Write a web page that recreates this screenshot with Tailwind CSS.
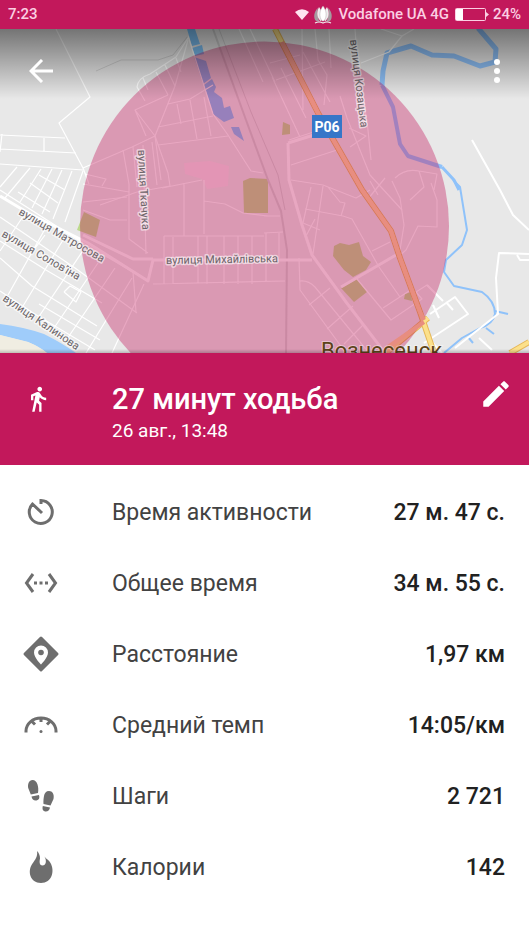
<!DOCTYPE html>
<html lang="ru">
<head>
  <meta charset="UTF-8" />
  <meta name="viewport" content="width=device-width, initial-scale=1.0" />
  <title>27 минут ходьба</title>
  <script src="https://cdn.jsdelivr.net/npm/@tailwindcss/browser@4"></script>
</head>
<body class="min-h-screen bg-white font-['Roboto',sans-serif] text-[#212121]">

  <!-- Status bar -->
  <div class="flex h-[29px] items-center justify-between bg-[#c2185b] px-2 text-[15px] font-medium text-[#fbcfe3]">
    <span>7:23</span>
    <div class="flex items-center">
      <svg class="mr-1 h-[11px] w-[14px]" viewBox="0 0 14 11" fill="#ffe3f0"><path d="M0 3Q7-2.500 14 3L7 11Z"/></svg>
      <svg class="mr-1.5 h-5 w-5" viewBox="0 0 20 20">
        <path d="M5 3C1 6 0 13 3 16L7 17C4 12 4 7 5 3ZM15 3C19 6 20 13 17 16L13 17C16 12 16 7 15 3Z" fill="#a59ba0"/>
        <path d="M6 2C3 8 4 13 8 16.500L8.500 6ZM14 2C17 8 16 13 12 16.500L11.500 6Z" fill="#eee"/>
        <path d="M10 1C6 6 6 12 9 16H11C14 12 14 6 10 1Z" fill="#fff" stroke="#b7a9af" stroke-width=".5"/>
        <path d="M2 18Q6 16 10 18Q14 16 18 18" fill="none" stroke="#eee" stroke-width="1.200"/>
      </svg>
      <span class="mr-1.5">Vodafone UA 4G</span>
      <svg class="mr-1 h-[13px] w-[34px]" viewBox="0 0 34 13">
        <rect x=".5" y=".5" width="30" height="12" rx="1" fill="none" stroke="#fbcfe3"/>
        <rect x="1" y="1" width="7" height="11" fill="#fff"/>
        <path d="M31 4L34 6.500L31 9Z" fill="#fbcfe3"/>
      </svg>
      <span>24%</span>
    </div>
  </div>

  <!-- Map -->
  <div class="relative aspect-[529/324] w-full overflow-hidden bg-[#e8e8e8]">
    <svg class="block h-full w-full" viewBox="0 29 529 324" preserveAspectRatio="xMidYMid slice" role="img" aria-label="Карта">
      <rect y="29" width="529" height="324" fill="#e8e8e8"/>

      <!-- water -->
      <path d="M0 324Q24 327 44 334Q62 343 76 353H47Q40 347 28 342L0 335Z" fill="#9fccfa"/>
      <path d="M0 335L28 342Q40 347 47 353H0Z" fill="#f0ede2"/>
      <path d="M187 29H195L200 44L192 46ZM192 48L202 45L204 54L195 56ZM194 57L206 61L211 78L203 84ZM204 85L212 79L216 87L214 92L222 98L224 108L230 106L234 118L224 122L213 114ZM231 127L239 127L244 141L234 134Z" fill="#7cc0f5"/>
      <g fill="none" stroke="#8fc2fa" stroke-linejoin="round">
        <path d="M478 28L496 49L495 62L480 66L454 56L432 55L411 46L387 53L383 71L382 85" stroke-width="5"/>
        <path d="M382 85L393 107L400 144L408 156L442 167" stroke-width="4"/>
        <path d="M442 167L454 180L459 190" stroke-width="3"/>
        <path d="M453 180L460 187L467 230L462 245L446 260L444 272L454 286L482 292Q495 301 495 314Q493 324 480 328L462 338L444 353" stroke-width="2"/>
        <path d="M495 311L508 314M486 328L494 334M468 337L473 343" stroke-width="2"/>
      </g>

      <!-- parks -->
      <g fill="#bcd98a">
        <path d="M84 212L100 220L96 237L77 230Z"/>
        <path d="M243 181L250 178L268 179V213H244Z"/>
        <path d="M283 122L290 125L290 134L282 135Z"/>
        <path d="M334 246L340 243L349 245L359 242L363 256L371 262L366 270L353 277L344 270L333 256Z"/>
        <path d="M341 288L357 279L367 292L354 302Z"/>
        <path d="M405 294L411 292L412 301L404 299Z"/>
      </g>
      <path d="M184 163L210 161L229 166L228 186L207 189L202 179L185 174Z" fill="#f7e3ec"/>

      <!-- rail -->
      <g fill="none" stroke="#cfcfcf">
        <path d="M213 29L246 120L268 180L281 211L287 250L286 353" stroke-width="2"/>
        <path d="M219 29L251 112L278 175L285 210" stroke-width="1"/>
        <path d="M96 71L121 60H158L173 55L188 36" stroke-width="1"/>
      </g>

      <!-- small streets -->
      <g fill="none" stroke="#fff" stroke-width="1.200" stroke-linejoin="round">
        <path d="M56 29L90 97L59 123L83 168L89 184"/>
        <path d="M0 135L65 138M0 149L76 153M0 164L83 170M2 134L0 152M44 138V152"/>
        <path d="M30 168L5 198M41 169L20 202M52 169L32 208M62 170L42 214M72 171L53 219M83 171L65 222M17 167L0 187M39 175L65 190M30 183L58 203M18 192L50 212"/>
        <path d="M0 190L83 243L133 272L136 312M0 217L75 268L137 313M0 241L46 270L102 303M0 258L32 286L97 326M0 291L33 313L95 350M39 304L100 340"/>
        <path d="M24 215L0 251M45 229L8 295M63 240L23 306M82 252L38 318M98 263L54 328M115 268L67 339M132 278L86 353M144 284L112 353M64 292L70 286L81 292L76 302L64 292M30 255L45 235"/>
        <path d="M83 168L132 147L155 136L175 86L188 40M155 136L135 110L168 95M155 136L168 173L170 186L137 192L100 205M135 110L146 136M168 104L190 99L213 85M158 127L213 116M177 104L181 124M190 100L197 139M204 97L211 136M158 145L228 136"/>
        <path d="M188 36L213 114L228 135L251 171L263 173M137 87Q138 78 150 74L176 57L188 38M137 87L145 101M156 72L168 95M165 65L175 86M176 58L181 72M143 78L148 90"/>
        <path d="M123 150L129 184V239L148 253M133 147L137 187M143 145L146 254M152 142L157 185M155 136L161 180M83 184L129 192M83 202L127 197M83 210L110 220H127M85 174L106 179L102 186"/>
        <path d="M164 236H264M164 236V284M173 237V284M198 236V284M207 236V284M224 236V284M238 236V284M252 236V284M153 284L285 281M204 180V234M184 183V236M204 201L225 204L243 213L268 216M162 188L202 180M264 216H280M264 233L283 232M266 233V282M279 233V258"/>
        <path d="M239 29L263 82M250 29L275 82M270 63L300 55M276 80L325 62M302 29L303 110M315 29L318 60L327 75L324 105M329 29L331 68M355 29L356 43L368 130L371 160M381 29L402 36L389 52L361 63M402 36L414 29M272 77L300 137M281 68L306 118M292 60L318 113M303 52L330 102M340 96L347 118L370 175L402 210"/>
        <path d="M289 140L341 123M291 165L337 150M291 180L323 185L356 198L370 190M311 187L303 223L320 230M323 186L313 254M328 187L340 202L345 203L341 216M305 209L343 216L352 219L379 267L400 297M306 236L315 219M370 181L378 195M385 178L368 199M392 181L400 198L404 225L400 250L398 257L406 250L418 226L437 227V200L431 183M395 178Q405 168 419 171L424 187L410 200M419 171L437 174L434 190M350 147L366 136L349 128"/>
        <path d="M372 251L390 242M299 258L300 290L346 353M300 281Q308 280 315 287L369 353M309 305L330 288M327 329L353 306M344 344L364 324M357 279L391 320L422 299L416 292L427 285L437 295M383 308L409 291"/>
      </g>
      <g fill="none" stroke="#fff" stroke-width="2" stroke-linejoin="round">
        <path d="M472 140L500 190L513 215L529 230"/>
        <path d="M455 348L498 314L496 278L499 253L529 254M517 255L520 260H529M430 314L455 297L468 314L424 343M442 353L430 340M433 305L439 318M446 302L453 310M479 338L492 350M427 285L443 301"/>
      </g>

      <!-- larger streets -->
      <g fill="none" stroke="#fff" stroke-width="3" stroke-linejoin="round">
        <path d="M0 196L30 214L88 243L148 281L153 260H312"/>
        <path d="M83 235L133 259H153"/>
        <path d="M288 143L289 180L302 225L312 255L346 302L385 353"/>
        <path d="M341 287L396 255M288 143L330 130"/>
      </g>

      <!-- highway -->
      <g fill="none" stroke-linejoin="round">
        <path d="M275 29L318 113L362 190L391 231L400 258L420 312L434 353M428 318L386 353M529 342L510 353" stroke="#e5b657" stroke-width="6"/>
        <path d="M275 29L318 113L362 190L391 231L400 258L420 312L434 353M428 318L386 353M529 342L510 353" stroke="#fce08a" stroke-width="4"/>
      </g>

      <circle cx="264.500" cy="226" r="184.500" fill="#c2185b" fill-opacity=".38"/>
      <path d="M282 42L318 113L362 190L391 231L400 258L420 312L424 320M424 322L388 347" fill="none" stroke="#e88d80" stroke-width="4"/>

      <!-- labels -->
      <g class="font-['Roboto',sans-serif]" font-size="11" fill="#6b6468" stroke="#fff" stroke-opacity=".55" stroke-width="3" stroke-linejoin="round" paint-order="stroke">
        <text transform="translate(18 214) rotate(30)">вулиця Матросова</text>
        <text transform="translate(1 236) rotate(30)">вулиця Солов'їна</text>
        <text transform="translate(2 300) rotate(34)">вулиця Калинова</text>
        <text transform="translate(138 150) rotate(87)">вулиця Ткачука</text>
        <text transform="translate(350 40) rotate(83)">вулиця Козацька</text>
        <text transform="translate(166 264) rotate(-1)">вулиця Михайлівська</text>
      </g>
      <text x="321" y="358" font-size="22" class="font-['Roboto',sans-serif]" fill="#5c4218" stroke="#fff" stroke-opacity=".4" stroke-width="2" paint-order="stroke">Вознесенск</text>
      <rect x="312" y="115" width="30" height="23" fill="#3676c8"/>
      <text x="327" y="132" text-anchor="middle" font-size="14" font-weight="700" class="font-['Roboto',sans-serif]" fill="#fff">P06</text>
    </svg>

    <div class="absolute inset-x-0 top-0 h-[70px] bg-linear-to-b from-black/50 to-transparent"></div>
    <div class="absolute inset-x-0 bottom-0 h-1 bg-linear-to-t from-black/20 to-transparent"></div>

    <div class="absolute inset-x-0 top-0 flex justify-between py-5 pr-5 pl-6">
      <button type="button" aria-label="Назад" class="flex h-11 w-[34px] items-center justify-center">
        <svg class="h-6 w-6" viewBox="0 0 24 24" fill="none" stroke="#fff" stroke-width="3"><path d="M24 12H2M13 1L2 12L13 23"/></svg>
      </button>
      <button type="button" aria-label="Ещё" class="flex h-11 w-6 items-center justify-center">
        <svg class="h-6 w-6" viewBox="0 0 24 24" fill="#fff"><circle cx="12" cy="3" r="3"/><circle cx="12" cy="12" r="3"/><circle cx="12" cy="21" r="3"/></svg>
      </button>
    </div>
  </div>

  <!-- Activity header -->
  <header class="flex h-28 items-start bg-[#c2185b] pr-4 text-white">
    <div class="flex w-28 shrink-0 pt-8 pl-6">
      <svg class="h-7 w-7" viewBox="0 0 24 24" fill="#fff"><path d="M13.500 5.500c1.100 0 2-.9 2-2s-.9-2-2-2-2 .9-2 2 .9 2 2 2zM9.800 8.900L7 23h2.100l1.800-8 2.100 2v6h2v-7.500l-2.100-2 .6-3C14.800 12 16.800 13 19 13v-2c-1.900 0-3.500-1-4.300-2.400l-1-1.600c-.4-.6-1-1-1.700-1-.3 0-.5.1-.8.1L6 8.300V13h2V9.600l1.800-.7"/></svg>
    </div>
    <div class="grow pt-7">
      <h1 class="text-[29px] leading-9 font-medium">27 минут ходьба</h1>
      <p class="text-[19px] leading-7">26 авг., 13:48</p>
    </div>
    <button type="button" aria-label="Изменить" class="mt-6">
      <svg class="h-[34px] w-[34px]" viewBox="0 0 24 24" fill="#fff"><path d="M3 17.250V21h3.750L17.810 9.940l-3.750-3.750L3 17.250zM20.710 7.040c.39-.39.39-1.020 0-1.410l-2.340-2.340c-.39-.39-1.020-.39-1.410 0l-1.830 1.830 3.750 3.750 1.830-1.830z"/></svg>
    </button>
  </header>

  <!-- Stats -->
  <dl class="px-6 pt-[11px] text-[23px]">
    <div class="flex h-[71px] items-center">
      <svg class="mr-[54px] h-[34px] w-[34px] shrink-0" viewBox="0 0 34 34" fill="none" stroke="#6e6e6e" stroke-width="3"><path d="M17 9V5.500A11.500 11.500 0 1 1 8.500 9L18 18"/></svg>
      <dt class="grow pt-1 text-[#424242]">Время активности</dt>
      <dd class="pt-1 font-medium">27 м. 47 с.</dd>
    </div>
    <div class="flex h-[71px] items-center">
      <svg class="mr-[54px] h-[34px] w-[34px] shrink-0" viewBox="0 0 34 34" fill="#6e6e6e"><path d="M9 8L2.500 17L9 26M25 8L31.500 17L25 26" fill="none" stroke="#6e6e6e" stroke-width="3"/><path d="M10 15.500h3v3h-3zM15.500 15.500h3v3h-3zM21 15.500h3v3h-3z"/></svg>
      <dt class="grow pt-1 text-[#424242]">Общее время</dt>
      <dd class="pt-1 font-medium">34 м. 55 с.</dd>
    </div>
    <div class="flex h-[71px] items-center">
      <svg class="mr-[54px] h-[34px] w-[34px] shrink-0 overflow-visible" viewBox="0 0 34 34"><path d="M17 1L33 17L17 33L1 17Z" fill="#6e6e6e" stroke="#6e6e6e" stroke-width="3" stroke-linejoin="round"/><path d="M17 8.500a7 7 0 0 0-7 7C10 20.500 17 27.500 17 27.500S24 20.500 24 15.500a7 7 0 0 0-7-7Z" fill="#fff"/><circle cx="17" cy="15.500" r="2.800" fill="#6e6e6e"/></svg>
      <dt class="grow pt-1 text-[#424242]">Расстояние</dt>
      <dd class="pt-1 font-medium">1,97 км</dd>
    </div>
    <div class="flex h-[71px] items-center">
      <svg class="mr-[54px] h-[34px] w-[34px] shrink-0" viewBox="0 0 34 34" fill="none" stroke="#6e6e6e" stroke-width="3"><path d="M2 24.500V23a15 13 0 0 1 30 0V24.500M17 10V14M8 13.500L11 16.500M26 13.500L23 16.500"/><circle cx="17" cy="23.500" r="1.500" fill="#6e6e6e" stroke="none"/></svg>
      <dt class="grow pt-1 text-[#424242]">Средний темп</dt>
      <dd class="pt-1 font-medium">14:05/км</dd>
    </div>
    <div class="flex h-[71px] items-center">
      <svg class="mr-[54px] h-[34px] w-[34px] shrink-0" viewBox="0 0 34 34" fill="#6e6e6e"><path d="M8.500 1C5 1 3.500 5 4.200 9L6.800 15.500L14 14C14.500 11 14.300 8 13.500 5.500C12.500 2.500 11 1 8.500 1ZM7.500 17.500L15 16C16 19 15 21 12.500 21.500C10 22 8 20.500 7.500 17.500ZM25 12C22 12 20.500 14 20 17C19.500 20 19.300 22 19.500 25L26.500 26.500L29.500 20C30.500 15.500 28.500 12 25 12ZM18.800 27L26 28.500C25.500 31.500 23.500 33 21 32.500C18.800 32 18 30 18.800 27Z"/></svg>
      <dt class="grow pt-1 text-[#424242]">Шаги</dt>
      <dd class="pt-1 font-medium">2 721</dd>
    </div>
    <div class="flex h-[71px] items-center">
      <svg class="mr-[54px] h-[34px] w-[34px] shrink-0" viewBox="0 0 34 34" fill="#6e6e6e"><path d="M13 1C14 6.500 11 10 8.500 13.500C3 21 6 33 17 33S31 21 26.500 13C25 10 22 9 20.500 6.500C23 11 22 15.500 18.500 15.500C15 15.500 15.500 11 16 8.500C16 5.500 15 3 13 1Z"/></svg>
      <dt class="grow pt-1 text-[#424242]">Калории</dt>
      <dd class="pt-1 font-medium">142</dd>
    </div>
  </dl>
</body>
</html>
